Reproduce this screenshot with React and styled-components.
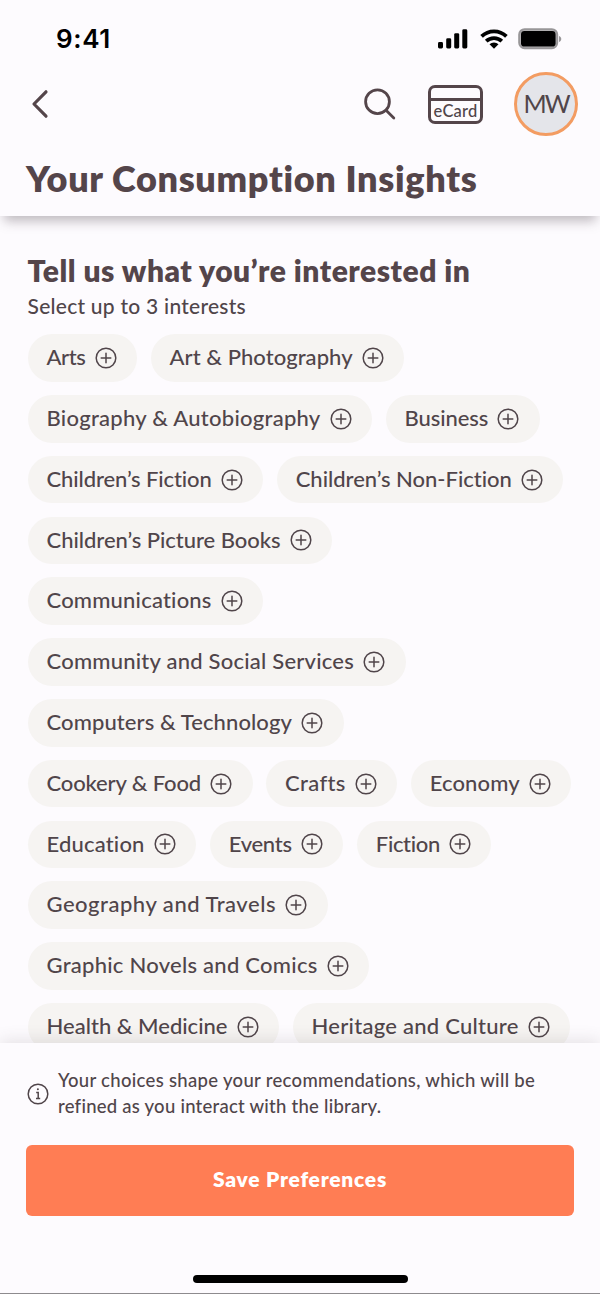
import { useLayoutEffect, useRef, useState } from "react";
import styled, { createGlobalStyle } from "styled-components";

const interests = [
  { label: "Arts", width: 39 },
  { label: "Art & Photography", width: 183 },
  { label: "Biography & Autobiography", width: 274 },
  { label: "Business", width: 83.5 },
  { label: "Children’s Fiction", width: 165.5 },
  { label: "Children’s Non-Fiction", width: 216.5 },
  { label: "Children’s Picture Books", width: 234 },
  { label: "Communications", width: 165.5 },
  { label: "Community and Social Services", width: 307.5 },
  { label: "Computers & Technology", width: 245.5 },
  { label: "Cookery & Food", width: 154.5 },
  { label: "Crafts", width: 60 },
  { label: "Economy", width: 90 },
  { label: "Education", width: 98.5 },
  { label: "Events", width: 63 },
  { label: "Fiction", width: 64.5 },
  { label: "Geography and Travels", width: 229.5 },
  { label: "Graphic Novels and Comics", width: 271 },
  { label: "Health & Medicine", width: 181 },
  { label: "Heritage and Culture", width: 207 },
];

// Spreads the letters so that the text fills exactly `width` pixels
const FitText = ({ width, children }) => {
  const ref = useRef(null);
  const [spacing, setSpacing] = useState(0);

  useLayoutEffect(() => {
    const natural = ref.current.getBoundingClientRect().width;
    setSpacing((width - natural) / children.length);
  }, [width, children]);

  return (
    <Fit ref={ref} style={{ letterSpacing: spacing }}>
      {children}
    </Fit>
  );
};

const PlusIcon = () => (
  <svg width="22" height="22" viewBox="0 0 22 22" fill="none" stroke="#50454a" strokeWidth="1.5">
    <circle cx="11" cy="11" r="9.8" />
    <path d="M11 6.2v9.6M6.2 11h9.6" strokeLinecap="round" />
  </svg>
);

const InfoIcon = () => (
  <svg width="22" height="22" viewBox="0 0 22 22" fill="none" stroke="#50454a" strokeWidth="1.5">
    <circle cx="11" cy="11" r="9.8" />
    <path d="M9.2 9.4h2v6M9 15.6h4.2" />
    <circle cx="10.9" cy="6.3" r="1" fill="#50454a" stroke="none" />
  </svg>
);

const BackIcon = () => (
  <svg width="18" height="30" viewBox="0 0 18 30" fill="none" stroke="#54454a" strokeWidth="3.2" strokeLinecap="round" strokeLinejoin="round">
    <path d="M15 2.800L3 15L15 27.200" />
  </svg>
);

const SearchIcon = () => (
  <svg width="32" height="32" viewBox="0 0 32 32" fill="none" stroke="#54454a" strokeWidth="2.8" strokeLinecap="round">
    <circle cx="13.5" cy="13.7" r="11.9" />
    <path d="M22.3 22.6L29.8 30" />
  </svg>
);

const SignalIcon = () => (
  <svg width="30" height="20" viewBox="0 0 30 20">
    <rect x="0" y="13" width="5" height="6.5" rx="1.4" />
    <rect x="8.2" y="9.3" width="5" height="10.2" rx="1.4" />
    <rect x="16.2" y="4.2" width="5" height="15.3" rx="1.4" />
    <rect x="24.3" y="0.3" width="5" height="19.2" rx="1.4" />
  </svg>
);

const WifiIcon = () => (
  <svg width="28" height="20" viewBox="0 0 28 20" fill="none" stroke="#000" strokeWidth="3.7">
    <path d="M1.6 7.4a17.6 17.6 0 0 1 24.8 0" />
    <path d="M6.2 12.2a11.2 11.2 0 0 1 15.6 0" />
    <path d="M9.5 15.3a6.6 6.6 0 0 1 9 0L14 19.8z" fill="#000" stroke="none" />
  </svg>
);

const BatteryIcon = () => (
  <svg width="44" height="22" viewBox="0 0 44 22">
    <rect x="1.2" y="1.2" width="38" height="19" rx="5.4" fill="#b9b7b9" stroke="#989698" strokeWidth="2" />
    <rect x="3" y="3" width="34.6" height="15.6" rx="3.4" />
    <path d="M41 8c3 .9 3 5.100 0 6z" fill="#989698" />
  </svg>
);

const App = () => {
  return (
    <>
      <GlobalStyle />
      <Screen>
        <Header>
          <StatusBar>
            <Time>
              <FitText width={55}>9:41</FitText>
            </Time>
            <StatusIcons>
              <SignalIcon />
              <WifiIcon />
              <BatteryIcon />
            </StatusIcons>
          </StatusBar>
          <NavBar>
            <BackIcon />
            <NavActions>
              <SearchIcon />
              <ECard>
                <ECardLabel>
                  <FitText width={44}>eCard</FitText>
                </ECardLabel>
              </ECard>
              <Avatar>
                <FitText width={45}>MW</FitText>
              </Avatar>
            </NavActions>
          </NavBar>
          <PageTitle>
            <FitText width={452}>Your Consumption Insights</FitText>
          </PageTitle>
        </Header>
        <Content>
          <SectionTitle>
            <FitText width={443}>Tell us what you’re interested in</FitText>
          </SectionTitle>
          <Hint>
            <FitText width={218.5}>Select up to 3 interests</FitText>
          </Hint>
          <ChipList>
            {interests.map(({ label, width }) => (
              <Chip key={label}>
                <ChipLabel>
                  <FitText width={width}>{label}</FitText>
                </ChipLabel>
                <PlusIcon />
              </Chip>
            ))}
          </ChipList>
        </Content>
        <Footer>
          <Note>
            <InfoIcon />
            <NoteText>
              <FitText width={477.5}>Your choices shape your recommendations, which will be</FitText>
              <FitText width={323}>refined as you interact with the library.</FitText>
            </NoteText>
          </Note>
          <SaveButton>
            <FitText width={174}>Save Preferences</FitText>
          </SaveButton>
          <HomeIndicator />
        </Footer>
      </Screen>
    </>
  );
};

const GlobalStyle = createGlobalStyle`
  * {
    box-sizing: border-box;
  }

  body {
    margin: 0;
    background: #fdfbfe;
    font-family: Lato, "Open Sans", sans-serif;
    color: #50454a;
  }

  svg {
    display: block;
    flex-shrink: 0;
  }
`;

const Fit = styled.span`
  display: inline-block;
  white-space: nowrap;
`;

const Screen = styled.div`
  width: 600px;
  height: 1294px;
  display: flex;
  flex-direction: column;
  overflow: hidden;
`;

const Header = styled.header`
  position: relative;
  z-index: 1;
  height: 216px;
  flex-shrink: 0;
  background: #fdfbfe;
  box-shadow: 0 9px 11px -4px rgba(70, 60, 66, 0.34);
`;

const StatusBar = styled.div`
  height: 72px;
  padding: 5px 38px 0 56px;
  display: flex;
  align-items: center;
  justify-content: space-between;
`;

const Time = styled.div`
  font-family: Inter, sans-serif;
  font-size: 26px;
  font-weight: 600;
  color: #000;
`;

const StatusIcons = styled.div`
  display: flex;
  align-items: center;
  gap: 12px;

  & > :last-child {
    margin-left: -2px;
  }
`;

const NavBar = styled.div`
  height: 64px;
  padding: 0 22px 0 31px;
  display: flex;
  align-items: center;
  justify-content: space-between;
`;

const NavActions = styled.div`
  display: flex;
  align-items: center;
  gap: 31px;

  & > :first-child {
    margin-right: 1px;
  }
`;

const ECard = styled.div`
  width: 55px;
  height: 39px;
  border: 3px solid #54454a;
  border-radius: 7px;
  display: flex;
  flex-direction: column;

  &::before {
    content: "";
    height: 10px;
    flex-shrink: 0;
    border-bottom: 3px solid #54454a;
  }
`;

const ECardLabel = styled.div`
  margin: 0 -2px;
  font-size: 16.5px;
  font-weight: 500;
  line-height: 21px;
  text-align: center;
`;

const Avatar = styled.div`
  width: 64px;
  height: 64px;
  padding-bottom: 3px;
  border: 3px solid #f39c62;
  border-radius: 50%;
  background: #e4e5ea;
  display: flex;
  align-items: center;
  justify-content: center;
  font-size: 25px;
  color: #50454a;
`;

const PageTitle = styled.h1`
  margin: 0;
  padding: 20px 26px 0;
  font-size: 36px;
  line-height: 44px;
  font-weight: 800;
  color: #54454a;
`;

const Content = styled.main`
  flex: 1;
  min-height: 0;
  overflow: hidden;
  padding: 35px 27px 0 27.5px;
`;

const SectionTitle = styled.h2`
  margin: 0;
  font-size: 30px;
  line-height: 38px;
  font-weight: 800;
  color: #54454a;
`;

const Hint = styled.p`
  margin: 0;
  padding-top: 1px;
  font-size: 21px;
  line-height: 32px;
  font-weight: 500;
`;

const ChipList = styled.div`
  margin-top: 12.3px;
  display: flex;
  flex-wrap: wrap;
  gap: 13.3px 13.6px;
`;

const Chip = styled.div`
  height: 47.5px;
  padding: 0 20.5px 0 19px;
  display: flex;
  align-items: center;
  gap: 9px;
  border-radius: 24px;
  background: #f6f4f2;
`;

const ChipLabel = styled.div`
  padding-bottom: 1.5px;
  font-size: 22px;
  line-height: 28px;
  font-weight: 500;
`;

const Footer = styled.footer`
  position: relative;
  height: 251px;
  flex-shrink: 0;
  padding: 0 26px;
  display: flex;
  flex-direction: column;
  background: #fdfbfe;
  border-bottom: 1px solid #8d8b8e;
  box-shadow: 0 -2px 16px rgba(70, 60, 66, 0.14);
`;

const Note = styled.div`
  height: 102px;
  padding: 0 1px;
  display: flex;
  align-items: center;
  gap: 9px;
`;

const NoteText = styled.div`
  display: flex;
  flex-direction: column;
  align-items: flex-start;
  font-size: 18.5px;
  line-height: 25.6px;
  font-weight: 500;
`;

const SaveButton = styled.button`
  height: 71px;
  padding: 0 0 4px;
  border: 0;
  border-radius: 6px;
  background: #ff7d54;
  font-family: inherit;
  font-size: 21px;
  font-weight: 800;
  color: #fff;
`;

const HomeIndicator = styled.div`
  width: 215px;
  height: 8px;
  margin: 58.7px auto 0;
  border-radius: 4px;
  background: #000;
`;

export default App;
